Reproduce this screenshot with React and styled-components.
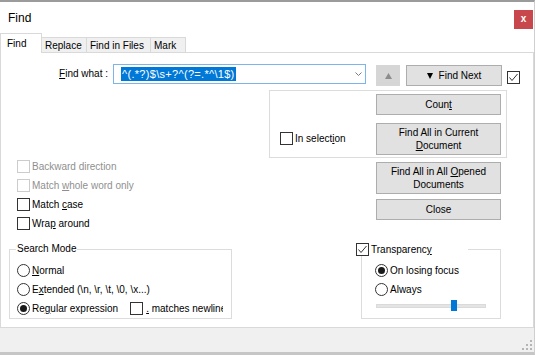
import React from 'react';
import styled, { createGlobalStyle } from 'styled-components';

const GlobalStyle = createGlobalStyle`
  html, body { margin: 0; padding: 0; background: #ffffff; }
  body { font-family: "Liberation Sans", Arial, sans-serif; font-size: 10px; color: #000; }
  * { box-sizing: border-box; }
`;

const Window = styled.div`
  width: 535px;
  height: 355px;
  display: flex;
  flex-direction: column;
  background: #fff;
  border-top: 2px solid #9b9b9b;
  border-right: 1px solid #cfcfcf;
  border-bottom: 3px solid #c6c6c6;
  overflow: hidden;
`;

const TitleBar = styled.div`
  height: 31px;
  flex: none;
  display: flex;
  align-items: center;
  justify-content: space-between;
  padding-left: 8px;
`;

const Title = styled.div`
  font-size: 12px;
`;

const CloseButton = styled.div`
  width: 19px;
  height: 19px;
  align-self: flex-start;
  margin-top: 8px;
  margin-right: 1px;
  background: #c8474c;
  color: #fff;
  font-weight: bold;
  font-size: 10px;
  display: flex;
  align-items: center;
  justify-content: center;
  line-height: 1;
  padding-bottom: 2px;
`;

const TabStrip = styled.div`
  height: 19px;
  flex: none;
  display: flex;
  align-items: flex-end;
  position: relative;
  z-index: 1;
`;

const Tab = styled.div`
  width: ${p => p.$w}px;
  height: ${p => (p.$active ? 20 : 15)}px;
  margin-bottom: ${p => (p.$active ? -1 : 0)}px;
  background: ${p => (p.$active ? '#fff' : '#f0f0f0')};
  border-top: 1px solid #d9d9d9;
  border-right: 1px solid #d9d9d9;
  border-left: ${p => (p.$active ? '1px solid #d9d9d9' : 'none')};
  display: flex;
  align-items: center;
  padding-left: ${p => (p.$active ? 6 : 3)}px;
  white-space: nowrap;
`;

const Panel = styled.div`
  flex: none;
  height: 276px;
  border: 1px solid #d9d9d9;
  display: flex;
  flex-direction: column;
  background: #fff;
`;

const FindRow = styled.div`
  margin-top: 11px;
  height: 22px;
  display: flex;
  align-items: flex-start;
`;

const FieldLabel = styled.div`
  width: 107px;
  height: 20px;
  line-height: 20px;
  text-align: right;
  white-space: nowrap;
`;

const Combo = styled.div`
  margin-left: 5px;
  width: 253px;
  height: 20px;
  border: 1px solid #7eb4ea;
  display: flex;
  align-items: center;
  padding-left: 7px;
`;

const Selected = styled.span`
  background: #0078d7;
  color: #fff;
  font-size: 11px;
  line-height: 14px;
  letter-spacing: 0.3px;
  padding: 0 1px;
  white-space: nowrap;
`;

const Chevron = styled.svg`
  margin-left: auto;
  margin-right: 3px;
`;

const SmallButton = styled.div`
  margin-left: ${p => p.$ml}px;
  margin-top: 1px;
  width: ${p => p.$w}px;
  height: 21px;
  background: ${p => (p.$disabled ? '#d6d6d6' : '#e1e1e1')};
  border: 1px solid ${p => (p.$disabled ? '#d6d6d6' : '#adadad')};
  display: flex;
  align-items: center;
  justify-content: center;
  gap: 6px;
  white-space: nowrap;
`;

const Body = styled.div`
  margin-top: 4px;
  display: flex;
`;

const LeftCol = styled.div`
  width: 268px;
  padding-left: 16px;
  padding-top: 67px;
  display: flex;
  flex-direction: column;
`;

const RightCol = styled.div`
  width: 238px;
  display: flex;
  flex-direction: column;
`;

const Frame = styled.div`
  border: 1px solid #dcdcdc;
  display: flex;
  justify-content: space-between;
  padding: 3px 5px 2px 10px;
`;

const SelectionSlot = styled.div`
  padding-top: 38px;
`;

const ButtonStack = styled.div`
  margin-left: ${p => p.$ml || 0}px;
  width: 125px;
  display: flex;
  flex-direction: column;
`;

const Button = styled.div`
  width: 125px;
  height: ${p => p.$h}px;
  margin-top: ${p => p.$mt || 0}px;
  background: #e1e1e1;
  border: 1px solid #adadad;
  display: flex;
  align-items: center;
  justify-content: center;
  text-align: center;
  line-height: 13px;
`;

const ButtonText = styled.span`
  display: block;
`;

const Option = styled.label`
  display: flex;
  align-items: center;
  gap: 2px;
  height: ${p => p.$h || 19}px;
  color: ${p => (p.$disabled ? '#8f8f8f' : '#000')};
  white-space: nowrap;
  margin-left: ${p => p.$ml || 0}px;
`;

const OptionText = styled.span`
  white-space: nowrap;
`;

const Box = styled.span`
  width: 13px;
  height: 13px;
  flex: none;
  border: 1px solid ${p => (p.$disabled ? '#cccccc' : '#333333')};
  background: #fff;
  display: flex;
  align-items: center;
  justify-content: center;
  margin-top: ${p => p.$mt || 0}px;
  margin-left: ${p => p.$ml || 0}px;
`;

const Round = styled.span`
  width: 13px;
  height: 13px;
  flex: none;
  border: 1px solid #333333;
  border-radius: 50%;
  background: #fff;
  display: flex;
  align-items: center;
  justify-content: center;
  &::after {
    content: '';
    display: ${p => (p.$on ? 'block' : 'none')};
    width: 7px;
    height: 7px;
    border-radius: 50%;
    background: #1a1a1a;
  }
`;

const U = styled.u`
  text-decoration: underline;
  text-underline-offset: 1px;
`;

const GroupsRow = styled.div`
  margin-top: 10px;
  padding-left: 8px;
  display: flex;
  align-items: flex-start;
`;

const Group = styled.fieldset`
  margin: 0 0 0 ${p => p.$ml || 0}px;
  width: ${p => p.$w}px;
  min-width: 0;
  border: 1px solid #dcdcdc;
  padding: ${p => p.$pad};
`;

const Legend = styled.legend`
  padding: 0 1px;
  line-height: 12px;
  font-size: 10px;
`;

const CheckLegend = styled.legend`
  padding: 0;
  margin-left: -19px;
  width: 112px;
  line-height: 13px;
  font-size: 10px;
`;

const Clip = styled.span`
  width: 77px;
  overflow: hidden;
  white-space: nowrap;
  margin-left: 1px;
`;

const Slider = styled.div`
  position: relative;
  margin-top: 1px;
  margin-left: 1px;
  width: 110px;
  height: 11px;
  display: flex;
  align-items: center;
`;

const Track = styled.div`
  width: 100%;
  height: 4px;
  background: #e4e4e4;
  border: 1px solid #dadada;
`;

const Thumb = styled.div`
  position: absolute;
  top: 0;
  width: 6px;
  height: 11px;
  background: #0078d7;
`;

const Footer = styled.div`
  flex: 1;
  background: #f0f0f0;
  display: flex;
  justify-content: flex-end;
  align-items: flex-end;
  padding: 0 1px 1px 0;
`;

const Check = () => (
  <svg width="11" height="11" viewBox="0 0 11 11">
    <polyline points="1.5,5.5 4,8.5 9.5,2" fill="none" stroke="#333" strokeWidth="1" />
  </svg>
);

const CheckBox = ({ checked, disabled, mt, ml }) => (
  <Box $disabled={disabled} $mt={mt} $ml={ml}>{checked && <Check />}</Box>
);

const Grip = () => (
  <svg width="12" height="12" viewBox="0 0 12 12">
    {[[9, 1], [5, 5], [9, 5], [1, 9], [5, 9], [9, 9]].map(([x, y]) => (
      <rect key={`${x}-${y}`} x={x} y={y} width="2" height="2" fill="#b5b5b5" />
    ))}
  </svg>
);

export default function App() {
  const sliderValue = 0.68;
  return (
    <>
      <GlobalStyle />
      <Window>
        <TitleBar>
          <Title>Find</Title>
          <CloseButton>x</CloseButton>
        </TitleBar>
        <TabStrip>
          <Tab $active $w={42}>Find</Tab>
          <Tab $w={45}>Replace</Tab>
          <Tab $w={64}>Find in Files</Tab>
          <Tab $w={35}>Mark</Tab>
        </TabStrip>
        <Panel>
          <FindRow>
            <FieldLabel><U>F</U>ind what :</FieldLabel>
            <Combo>
              <Selected>{'^(.*?)$\\s+?^(?=.*^\\1$)'}</Selected>
              <Chevron width="7" height="4" viewBox="0 0 7 4">
                <polyline points="0.5,0.5 3.5,3.5 6.5,0.5" fill="none" stroke="#7a7a7a" strokeWidth="1" />
              </Chevron>
            </Combo>
            <SmallButton $disabled $ml={10} $w={24}>
              <svg width="7" height="6" viewBox="0 0 7 6"><polygon points="3.5,0 7,6 0,6" fill="#8c8c8c" /></svg>
            </SmallButton>
            <SmallButton $ml={6} $w={96}>
              <svg width="6" height="6" viewBox="0 0 6 6"><polygon points="0,0 6,0 3,6" fill="#000" /></svg>
              <span>Find Next</span>
            </SmallButton>
            <CheckBox checked ml={5} mt={7} />
          </FindRow>
          <Body>
            <LeftCol>
              <Option $disabled><CheckBox disabled /><OptionText>Backward direction</OptionText></Option>
              <Option $disabled><CheckBox disabled /><OptionText>Match <U>w</U>hole word only</OptionText></Option>
              <Option><CheckBox /><OptionText>Match <U>c</U>ase</OptionText></Option>
              <Option><CheckBox /><OptionText>Wra<U>p</U> around</OptionText></Option>
            </LeftCol>
            <RightCol>
              <Frame>
                <SelectionSlot>
                  <Option $h={13}><CheckBox /><OptionText>In select<U>i</U>on</OptionText></Option>
                </SelectionSlot>
                <ButtonStack>
                  <Button $h={21}><ButtonText>Coun<U>t</U></ButtonText></Button>
                  <Button $h={32} $mt={8}><ButtonText>Find All in Current<br /><U>D</U>ocument</ButtonText></Button>
                </ButtonStack>
              </Frame>
              <ButtonStack $ml={107}>
                <Button $h={32} $mt={4}><ButtonText>Find All in All <U>O</U>pened<br />Documents</ButtonText></Button>
                <Button $h={21} $mt={5}><ButtonText>Close</ButtonText></Button>
              </ButtonStack>
            </RightCol>
          </Body>
          <GroupsRow>
            <Group $w={223} $pad="6px 0 0 6px">
              <Legend>Search Mode</Legend>
              <Option $ml={1}><Round /><OptionText><U>N</U>ormal</OptionText></Option>
              <Option $ml={1}><Round /><OptionText>E<U>x</U>tended (\n, \r, \t, \0, \x...)</OptionText></Option>
              <Option $ml={1}>
                <Round $on /><OptionText>Re<U>g</U>ular expression</OptionText>
                <CheckBox ml={10} />
                <Clip><U>.</U> matches newline</Clip>
              </Option>
            </Group>
            <Group $ml={129} $w={140} $pad="5px 0 7px 13px">
              <CheckLegend>
                <Option $h={13}><CheckBox checked /><OptionText>Transparenc<U>y</U></OptionText></Option>
              </CheckLegend>
              <Option><Round $on /><OptionText>On losing focus</OptionText></Option>
              <Option><Round /><OptionText>Always</OptionText></Option>
              <Slider>
                <Track />
                <Thumb style={{ left: `${Math.round(sliderValue * 110)}px` }} />
              </Slider>
            </Group>
          </GroupsRow>
        </Panel>
        <Footer>
          <Grip />
        </Footer>
      </Window>
    </>
  );
}
